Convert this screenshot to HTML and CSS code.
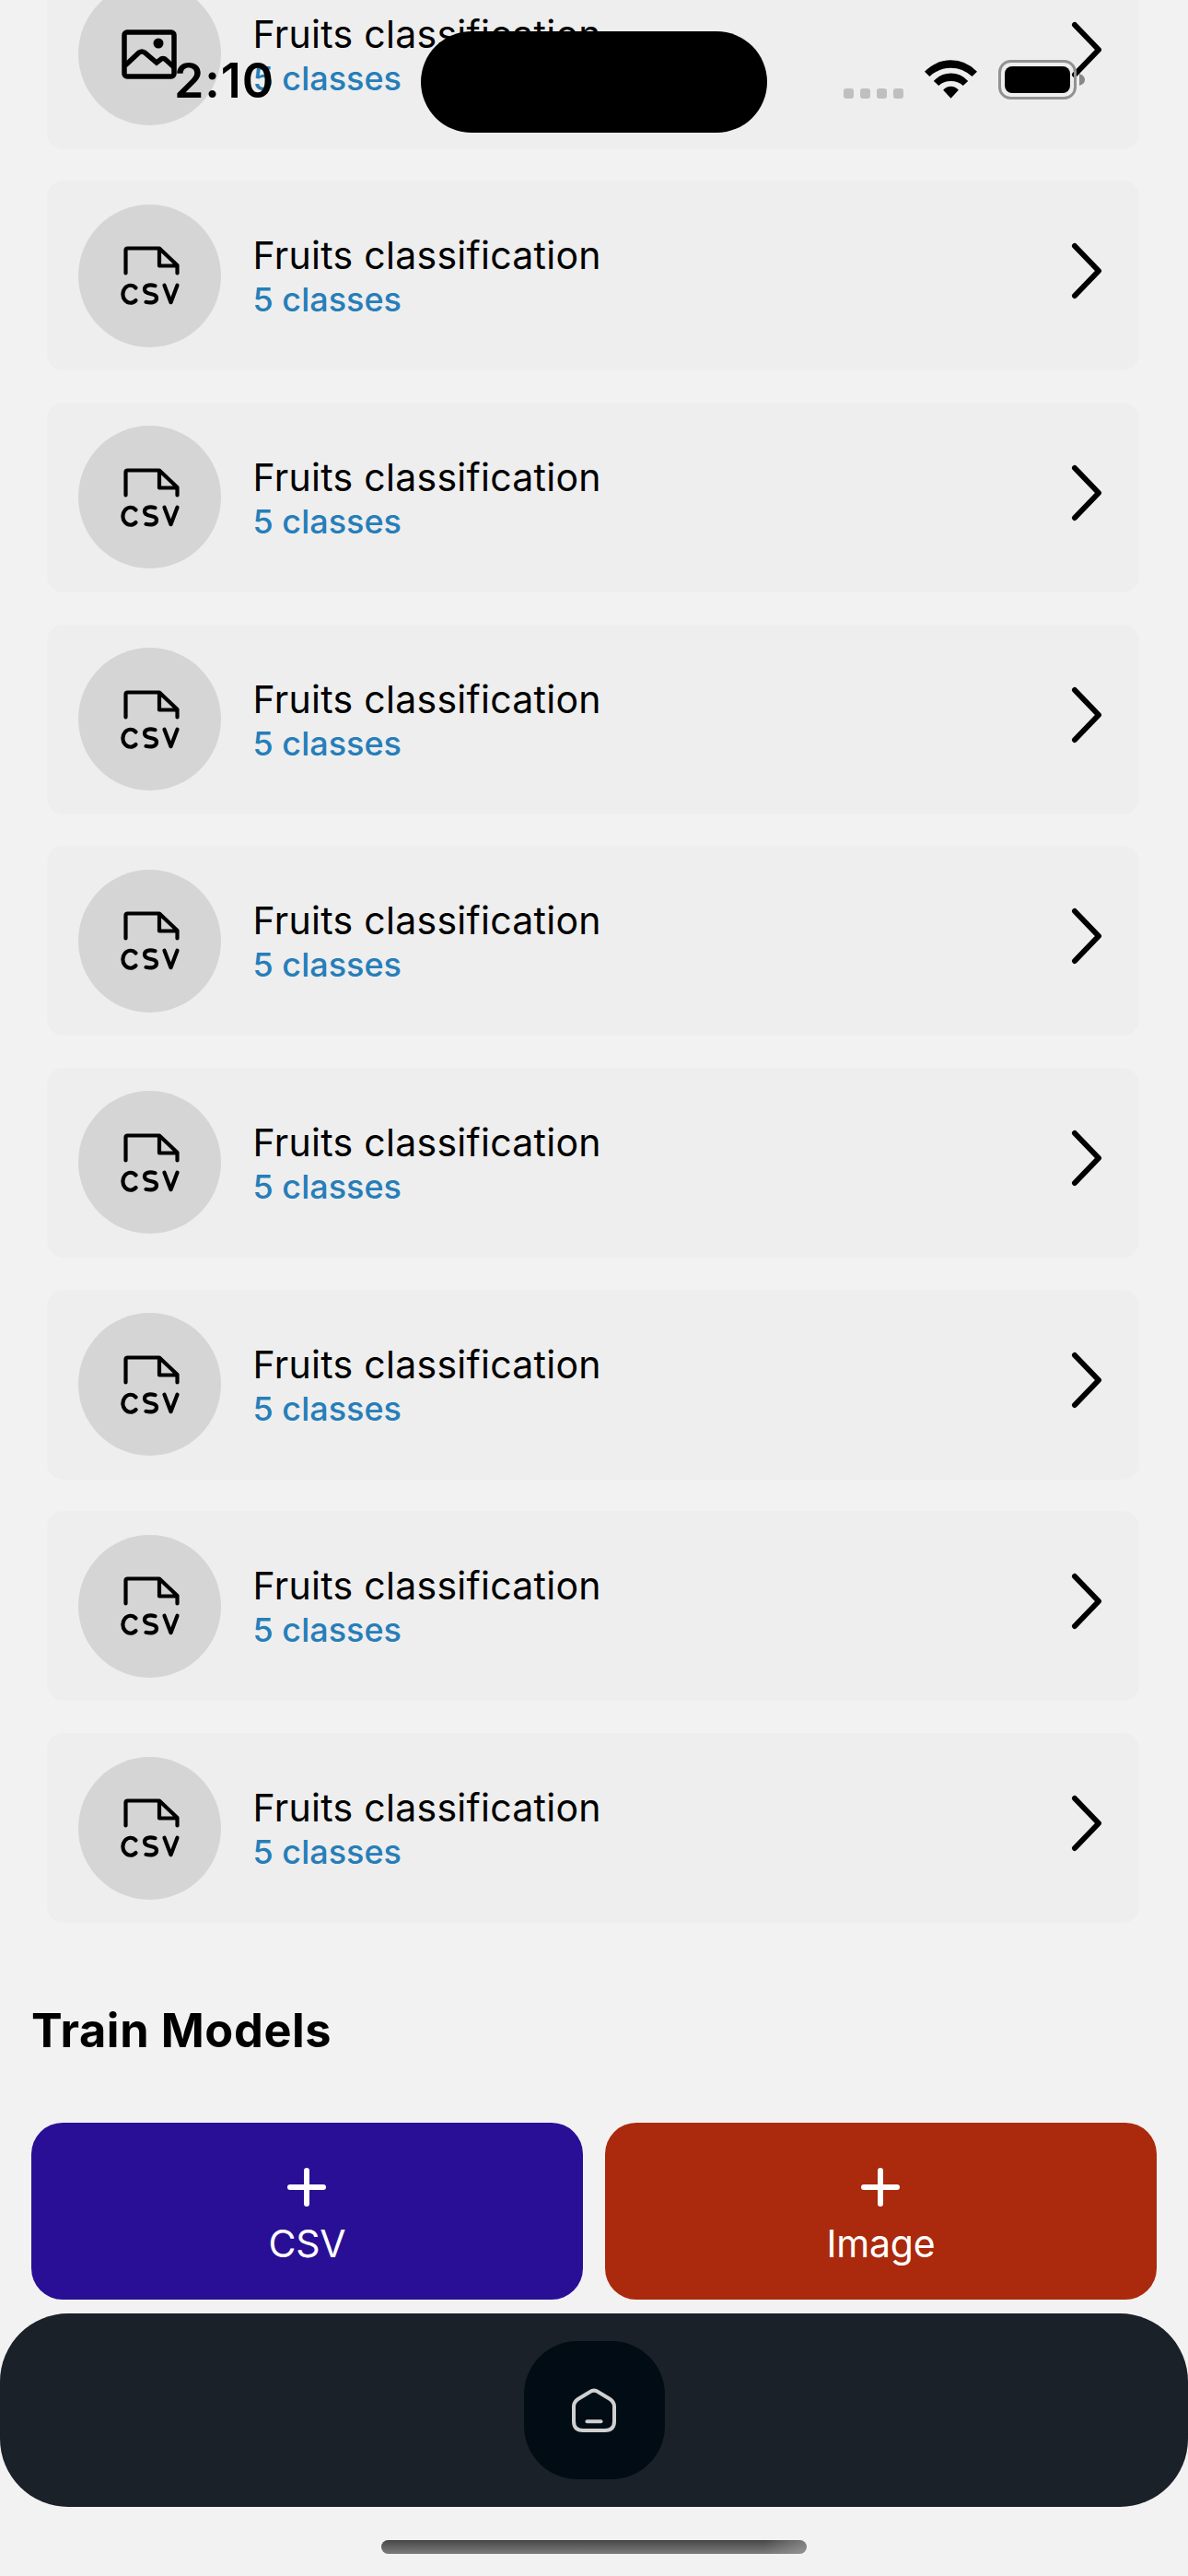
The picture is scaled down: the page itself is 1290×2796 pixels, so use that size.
FILE: index.html
```
<!DOCTYPE html>
<html lang="en">
<head>
<meta charset="utf-8">
<title>Models</title>
<link rel="stylesheet" href="styles.css">
</head>
<body>
<svg class="symbols" aria-hidden="true">
  <symbol id="csv" viewBox="0 0 66 66">
    <path d="M6.500 29.500V4.500q0-2 2-2H43L62.500 21v8.500M43 2.500v19h19"/>
    <path d="M17.500 45.500a8.300 9.500 0 1 0 0 13.500M38.500 43.200C31 41 26.800 43.500 27 47.300C27.500 54 40 50 40 56.500C40 62 33 62 28.500 60.800M48.500 42.700l7 18.500 7-18.500"/>
  </symbol>
  <symbol id="picture" viewBox="0 0 60 54">
    <rect x="3" y="3" width="54" height="48" rx="3"/>
    <path d="M4 39l15-14q3-2 6 0l13 11 5-4q2-1 4 0l10 9"/>
    <circle class="dot" cx="40" cy="15" r="5.500"/>
  </symbol>
  <symbol id="chevron" viewBox="0 0 34 62"><path d="M4 4l26 27L4 58"/></symbol>
  <symbol id="plus" viewBox="0 0 44 44"><path d="M22 4v36M4 22h36"/></symbol>
</svg>
<main class="screen">
  <section class="list" id="list">
    <article class="card"><div class="badge"><svg class="picture"><use href="#picture"/></svg></div><div class="info"><h2>Fruits classification</h2><p>5 classes</p></div><svg class="chevron"><use href="#chevron"/></svg></article>
    <article class="card"><div class="badge"><svg class="csv"><use href="#csv"/></svg></div><div class="info"><h2>Fruits classification</h2><p>5 classes</p></div><svg class="chevron"><use href="#chevron"/></svg></article>
    <article class="card"><div class="badge"><svg class="csv"><use href="#csv"/></svg></div><div class="info"><h2>Fruits classification</h2><p>5 classes</p></div><svg class="chevron"><use href="#chevron"/></svg></article>
    <article class="card"><div class="badge"><svg class="csv"><use href="#csv"/></svg></div><div class="info"><h2>Fruits classification</h2><p>5 classes</p></div><svg class="chevron"><use href="#chevron"/></svg></article>
    <article class="card"><div class="badge"><svg class="csv"><use href="#csv"/></svg></div><div class="info"><h2>Fruits classification</h2><p>5 classes</p></div><svg class="chevron"><use href="#chevron"/></svg></article>
    <article class="card"><div class="badge"><svg class="csv"><use href="#csv"/></svg></div><div class="info"><h2>Fruits classification</h2><p>5 classes</p></div><svg class="chevron"><use href="#chevron"/></svg></article>
    <article class="card"><div class="badge"><svg class="csv"><use href="#csv"/></svg></div><div class="info"><h2>Fruits classification</h2><p>5 classes</p></div><svg class="chevron"><use href="#chevron"/></svg></article>
    <article class="card"><div class="badge"><svg class="csv"><use href="#csv"/></svg></div><div class="info"><h2>Fruits classification</h2><p>5 classes</p></div><svg class="chevron"><use href="#chevron"/></svg></article>
    <article class="card"><div class="badge"><svg class="csv"><use href="#csv"/></svg></div><div class="info"><h2>Fruits classification</h2><p>5 classes</p></div><svg class="chevron"><use href="#chevron"/></svg></article>
  </section>
  <h1 class="heading">Train Models</h1>
  <div class="actions">
    <button class="action blue"><svg class="plus"><use href="#plus"/></svg><span>CSV</span></button>
    <button class="action red"><svg class="plus"><use href="#plus"/></svg><span>Image</span></button>
  </div>
  <nav class="nav">
    <div class="home"><svg viewBox="0 0 50 50"><path d="M20.500 4.200Q25 1 29.500 4.200L42 11.800Q47 15 47 20V36Q47 46 37 46H13Q3 46 3 36V20Q3 15 8 11.800Z"/><path d="M17.500 36.300h15"/></svg></div>
  </nav>
  <div class="indicator"></div>
</main>
<header class="status">
  <span class="time">2:10</span>
  <div class="island"></div>
  <div class="signal"><i></i><i></i><i></i><i></i></div>
  <svg class="wifi" viewBox="0 0 58 42"><path d="M0 12.500Q12.500 0 29 0T58 12.500L52.500 18Q42 8.500 29 8.500T5.500 18Z"/><path d="M10 23Q18 14.500 29 14.500T48 23L42.500 28Q37 23 29 23T15.500 28Z"/><path d="M20.500 33Q24 29 29 29T37.500 33L29 42Z"/></svg>
  <svg class="battery" viewBox="0 0 94 43"><rect class="shell" x="1.500" y="1.500" width="82" height="40" rx="12"/><rect x="7" y="7" width="71" height="29" rx="8"/><path class="tip" d="M88 15q6 2 6 6.500T88 28z"/></svg>
</header>
</body>
</html>
```
FILE: styles.css
```
* { box-sizing: border-box; }
body { margin: 0; width: 1290px; height: 2796px; overflow: hidden; background: #f2f2f2; color: #000; font-family: Inter, "Liberation Sans", sans-serif; }
h1, h2, p { margin: 0; }
svg { display: block; flex: none; }
.symbols { display: none; }
.screen { height: 2796px; display: flex; flex-direction: column; overflow: hidden; }
.list { display: flex; flex-direction: column; gap: 34.700px; margin: -44.500px 53px 0 51px; }
.card { height: 206px; flex: none; display: flex; align-items: center; padding: 0 40px 0 34px; border-radius: 18px; background: #eee; }
.badge { width: 155px; height: 155px; border-radius: 50%; background: #d5d5d5; display: flex; align-items: center; justify-content: center; }
.csv { width: 66px; height: 66px; margin-top: 2px; fill: none; stroke: #000; stroke-width: 4.200; stroke-linecap: round; stroke-linejoin: round; }
.picture { width: 60px; height: 54px; margin-right: 1px; fill: none; stroke: #000; stroke-width: 5.500; }
.dot { fill: #000; stroke: none; }
.info { flex: 1; margin: 2px 0 0 34.500px; }
.info h2 { font-size: 41px; line-height: 50px; font-weight: 400; letter-spacing: .28px; white-space: nowrap; }
.info p { color: #267eb9; font-size: 36px; line-height: 46px; font-weight: 500; }
.chevron { width: 34px; height: 62px; margin-top: -10px; fill: none; stroke: #000; stroke-width: 6; stroke-linecap: round; stroke-linejoin: round; }
.heading { margin: 87px 0 0 34px; font-size: 50.500px; line-height: 60px; font-weight: 700; letter-spacing: .6px; }
.actions { display: flex; gap: 24px; margin: 70px 34px 0; }
.action { flex: 1; height: 192px; padding: 0; border: 0; border-radius: 34px; display: flex; flex-direction: column; align-items: center; color: #fff; font: 400 41px/50px Inter, sans-serif; letter-spacing: -.2px; padding-top: 48px; }
.blue { background: #290f96; }
.red { background: #ab290c; }
.plus { width: 44px; height: 44px; margin: 0 1px 14px 0; stroke: #fff; stroke-width: 6; stroke-linecap: round; }
.nav { margin-top: 15px; height: 210px; flex: none; border-radius: 74px; background: #1a2128; display: flex; align-items: center; justify-content: center; }
.home { width: 153px; height: 150px; border-radius: 58px; background: #020c14; display: flex; align-items: center; justify-content: center; }
.home svg { width: 50px; height: 50px; margin: 2px 1px 0 0; fill: none; stroke: #d0d0d0; stroke-width: 4; stroke-linecap: round; stroke-linejoin: round; }
.indicator { width: 462px; height: 15px; flex: none; margin: 36px auto 0; border-radius: 8px; background: linear-gradient(90deg, transparent 90%, #aaaaaa88), linear-gradient(#474747, #7c7c7c); }
/* The system status bar floats over the scrolled list. */
.status { position: absolute; inset: 0 0 auto; height: 177px; }
.status > * { position: absolute; }
.time { left: 189px; top: 58px; font-size: 52px; line-height: 60px; font-weight: 600; letter-spacing: .9px; }
.island { left: 457px; top: 34px; width: 376px; height: 110px; border-radius: 55px; background: #000; }
.signal { left: 916px; top: 96px; display: flex; gap: 7px; }
.signal i { width: 11px; height: 11px; border-radius: 3px; background: #bfbfbf; }
.wifi { left: 1004px; top: 65px; width: 57px; height: 42px; }
.battery { left: 1084px; top: 65px; width: 94px; height: 43px; }
.shell { fill: none; stroke: #929292; stroke-width: 3; }
.tip { fill: #888; }
```
